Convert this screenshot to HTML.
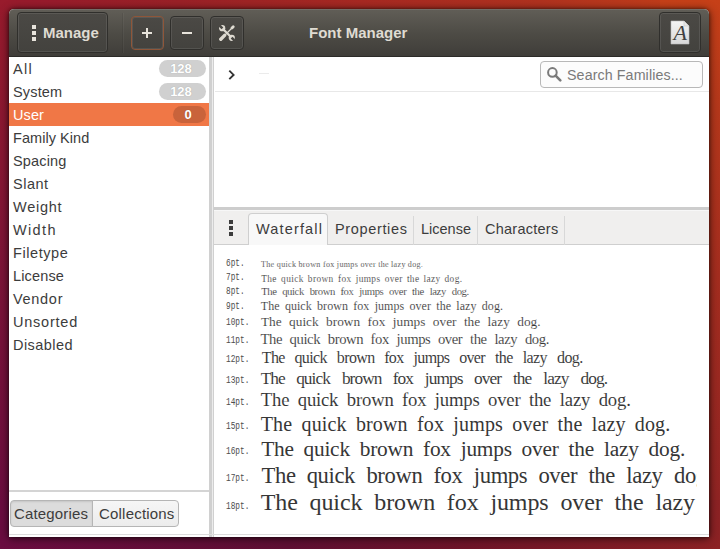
<!DOCTYPE html>
<html><head><meta charset="utf-8">
<style>
*{margin:0;padding:0;box-sizing:border-box}
html,body{width:720px;height:549px;overflow:hidden}
body{position:relative;font-family:"Liberation Sans",sans-serif;background:#7a1438}
.abs{position:absolute}
#bgtop{left:0;top:0;width:720px;height:60px;background:linear-gradient(to right,#981b2c 0%,#9a2127 25%,#a72922 50%,#b0321f 75%,#c64018 100%)}
#bgleft{left:0;top:0;width:60px;height:549px;background:linear-gradient(to bottom,#981b2c 0%,#7c1438 50%,#680c40 100%)}
#bgright{left:660px;top:0;width:60px;height:549px;background:linear-gradient(to bottom,#c64018 0%,#b4371b 20%,#a42d1f 50%,#8c2224 100%)}
#bgbot{left:0;top:500px;width:720px;height:49px;background:linear-gradient(to right,#6a0c40 0%,#5e0f33 40%,#6e1428 65%,#8c2224 100%)}
#win{left:9px;top:9px;width:700px;height:528px;border-radius:5px 5px 0 0;background:#fff;box-shadow:0 1px 9px rgba(0,0,0,.72),0 0 3px rgba(0,0,0,.45)}
#hb{left:9px;top:9px;width:700px;height:48px;border-radius:5px 5px 0 0;background:linear-gradient(to bottom,#615e57 0%,#4e4c46 50%,#3f3d39 100%);border-bottom:1px solid #2c2b28;box-shadow:inset 0 1px 0 rgba(255,255,255,.10)}
.btn{position:absolute;border:1px solid #302f2c;border-radius:4px;background:linear-gradient(to bottom,#4b4945,#43423e);box-shadow:inset 0 0 0 1px rgba(255,255,255,.09)}
.title{position:absolute;color:#dfdbd2;font-weight:bold;font-size:15px;white-space:nowrap}
.side{left:9px;top:57px;width:200px;height:480px;background:#fff}
.row{position:absolute;left:9px;width:200px;height:23px;font-size:14.5px;color:#3c3c3c}
.row span.t{position:absolute;left:4px;top:4px}
.badge{position:absolute;top:3px;height:17px;border-radius:9px;background:#d0d0d0;color:#fff;font-weight:bold;font-size:13px;text-align:center;line-height:18px;padding-right:3px;text-shadow:0 0 1px rgba(0,0,0,.25)}
.sel{background:#f07746;color:#fff}
.sel .badge{background:#c9633b}
.wf{position:absolute;left:226px;white-space:nowrap}
.lab{position:absolute;left:0;font-family:"Liberation Mono",monospace;font-size:9px;color:#555;letter-spacing:-0.8px}
.smp{position:absolute;left:35px;font-family:"Liberation Serif",serif;color:#333}
</style></head><body>
<div id="bgtop" class="abs"></div>
<div id="bgleft" class="abs"></div>
<div id="bgright" class="abs"></div>
<div id="bgbot" class="abs"></div>
<div id="win" class="abs"></div>
<div id="hb" class="abs"></div>

<!-- header buttons -->
<div class="btn" style="left:17px;top:12px;width:91px;height:41px"></div>
<div class="abs" style="left:32px;top:25px;width:4px;height:4px;background:#e8e4dc"></div>
<div class="abs" style="left:32px;top:31px;width:4px;height:4px;background:#e8e4dc"></div>
<div class="abs" style="left:32px;top:37px;width:4px;height:4px;background:#e8e4dc"></div>
<div class="title" style="left:43px;top:24px">Manage</div>

<div class="abs" style="left:122px;top:13px;width:1px;height:40px;background:rgba(0,0,0,.07);box-shadow:1px 0 0 rgba(255,255,255,.04)"></div>
<div class="btn" style="left:131px;top:16px;width:33px;height:34px;border-color:#8f5639"></div>
<div class="abs" style="left:142px;top:32px;width:10px;height:2px;background:#e8e4dc"></div>
<div class="abs" style="left:146px;top:28px;width:2px;height:10px;background:#e8e4dc"></div>

<div class="btn" style="left:170px;top:16px;width:34px;height:34px"></div>
<div class="abs" style="left:182px;top:32px;width:10px;height:2px;background:#e8e4dc"></div>

<div class="btn" style="left:210px;top:16px;width:34px;height:34px"></div>
<svg class="abs" style="left:219px;top:25px" width="16" height="16" viewBox="0 0 16 16">
<defs><mask id="wm"><rect width="16" height="16" fill="#fff"/>
<line x1="-1" y1="-1" x2="3.4" y2="3.4" stroke="#000" stroke-width="2.6"/>
<line x1="17" y1="17" x2="12.6" y2="12.6" stroke="#000" stroke-width="2.6"/></mask></defs>
<g fill="#dfdbd2" stroke="#dfdbd2" mask="url(#wm)">
<line x1="3.5" y1="3.5" x2="12.5" y2="12.5" stroke-width="2.2"/>
<circle cx="3.2" cy="3.2" r="3.1" stroke="none"/>
<circle cx="12.8" cy="12.8" r="3.1" stroke="none"/>
</g>
<g stroke="#dfdbd2" stroke-linecap="round">
<line x1="1.8" y1="14.2" x2="5.6" y2="10.4" stroke-width="3.4"/>
<line x1="5.5" y1="10.5" x2="13" y2="3" stroke-width="1.3"/>
<line x1="13" y1="3" x2="14.2" y2="1.8" stroke-width="2.8"/>
</g></svg>

<div class="title" style="left:309px;top:24px">Font Manager</div>

<div class="btn" style="left:659px;top:12px;width:42px;height:41px"></div>
<svg class="abs" style="left:670px;top:20px" width="20" height="25" viewBox="0 0 20 25">
<defs><linearGradient id="pg" x1="0" y1="0" x2="0" y2="1"><stop offset="0" stop-color="#f4f4f4"/><stop offset="1" stop-color="#d8d8d8"/></linearGradient></defs>
<path d="M1 1 H14 L19 6 V24 H1 Z" fill="url(#pg)" stroke="#bdbdbd" stroke-width="0.6"/>
<path d="M14 1 V6 H19" fill="#e6e6e6" stroke="#c8c8c8" stroke-width="0.6"/>
<text x="3.6" y="19.6" font-family="Liberation Serif" font-style="italic" font-size="22" fill="#404040">A</text>
</svg>

<!-- sidebar -->
<div class="row" style="top:57px"><span class="t" style="letter-spacing:1.3px">All</span><span class="badge" style="left:150px;width:47px">128</span></div>
<div class="row" style="top:80px"><span class="t" style="letter-spacing:0.16px">System</span><span class="badge" style="left:150px;width:47px">128</span></div>
<div class="row sel" style="top:103px"><span class="t" style="letter-spacing:0.1px">User</span><span class="badge" style="left:164px;width:33px">0</span></div>
<div class="row" style="top:126px"><span class="t" style="letter-spacing:0.05px">Family Kind</span></div>
<div class="row" style="top:149px"><span class="t" style="letter-spacing:0.17px">Spacing</span></div>
<div class="row" style="top:172px"><span class="t" style="letter-spacing:0.5px">Slant</span></div>
<div class="row" style="top:195px"><span class="t" style="letter-spacing:0.75px">Weight</span></div>
<div class="row" style="top:218px"><span class="t" style="letter-spacing:1.35px">Width</span></div>
<div class="row" style="top:241px"><span class="t" style="letter-spacing:0.57px">Filetype</span></div>
<div class="row" style="top:264px"><span class="t" style="letter-spacing:0.15px">License</span></div>
<div class="row" style="top:287px"><span class="t" style="letter-spacing:0.7px">Vendor</span></div>
<div class="row" style="top:310px"><span class="t" style="letter-spacing:0.77px">Unsorted</span></div>
<div class="row" style="top:333px"><span class="t" style="letter-spacing:0.46px">Disabled</span></div>

<!-- pane separators -->
<div class="abs" style="left:209px;top:57px;width:5px;height:480px;background:#d0d0d0;border-right:1px solid #d0d0d0"></div>
<div class="abs" style="left:212px;top:57px;width:1px;height:480px;background:#ececec"></div>

<!-- sidebar bottom -->
<div class="abs" style="left:9px;top:490px;width:200px;height:2px;background:#d4d4d4"></div>
<div class="abs" style="left:10px;top:500px;width:83px;height:27px;border:1px solid #b5b5b5;border-radius:4px 0 0 4px;background:#dcdcdc;box-shadow:inset 0 1px 2px rgba(0,0,0,.1);font-size:15px;color:#3c3c3c;padding:4px 0 0 3px;letter-spacing:0.15px">Categories</div>
<div class="abs" style="left:92px;top:500px;width:87px;height:27px;border:1px solid #b5b5b5;border-radius:0 4px 4px 0;background:linear-gradient(#f6f6f6,#ececec);font-size:15px;color:#3c3c3c;padding:4px 0 0 6px;letter-spacing:0.2px">Collections</div>
<div class="abs" style="left:9px;top:534px;width:700px;height:1px;background:#dcdcdc"></div>

<!-- right top -->
<div class="abs" style="left:540px;top:61px;width:163px;height:27px;border:1px solid #b8b8b8;border-radius:4px;background:#fcfcfc"></div>
<div class="abs" style="left:567px;top:67px;font-size:14.25px;color:#7a7a7a;letter-spacing:0.1px">Search Families...</div>
<div class="abs" style="left:215px;top:91px;width:494px;height:1px;background:#e8e8e8"></div>
<svg class="abs" style="left:546px;top:66px" width="16" height="16" viewBox="0 0 16 16">
<circle cx="6.4" cy="6.4" r="4.3" fill="none" stroke="#7a7a7a" stroke-width="2"/>
<line x1="9.6" y1="9.6" x2="14.3" y2="14.3" stroke="#7a7a7a" stroke-width="2.6" stroke-linecap="round"/>
</svg>
<svg class="abs" style="left:225px;top:66px" width="14" height="16" viewBox="0 0 14 16">
<polyline points="4.3,4.6 8.6,8.9 4.3,13.2" fill="none" stroke="#333" stroke-width="1.9"/>
</svg>
<div class="abs" style="left:259px;top:73px;width:10px;height:1px;background:#ebebeb"></div>

<!-- notebook -->
<div class="abs" style="left:214px;top:207px;width:495px;height:3px;background:#cdcdcd"></div>
<div class="abs" style="left:214px;top:210px;width:495px;height:1px;background:#f7f7f7"></div>
<div class="abs" style="left:214px;top:211px;width:495px;height:34px;background:#f0efee;border-bottom:1px solid #cfcfcf"></div>
<div class="abs" style="left:229px;top:220px;width:4px;height:4px;background:#3c3c3c"></div>
<div class="abs" style="left:229px;top:226px;width:4px;height:4px;background:#3c3c3c"></div>
<div class="abs" style="left:229px;top:232px;width:4px;height:4px;background:#3c3c3c"></div>
<div class="abs" style="left:248px;top:213px;width:80px;height:32px;border:1px solid #cfcfcf;border-bottom:none;border-radius:4px 4px 0 0;background:#f8f8f8"></div>
<div class="abs" style="left:256px;top:221px;font-size:14.5px;color:#3c3c3c;letter-spacing:1.15px">Waterfall</div>
<div class="abs" style="left:335px;top:221px;font-size:14.5px;color:#3c3c3c;letter-spacing:0.65px">Properties</div>
<div class="abs" style="left:413px;top:216px;width:1px;height:29px;background:#d8d8d8"></div>
<div class="abs" style="left:421px;top:221px;font-size:14.5px;color:#3c3c3c">License</div>
<div class="abs" style="left:477px;top:216px;width:1px;height:29px;background:#d8d8d8"></div>
<div class="abs" style="left:485px;top:221px;font-size:14.5px;color:#3c3c3c;letter-spacing:0.25px">Characters</div>
<div class="abs" style="left:564px;top:216px;width:1px;height:29px;background:#d8d8d8"></div>

<svg class="abs" style="left:0;top:0" width="720" height="549" viewBox="0 0 720 549">
<defs><clipPath id="wfclip"><rect x="214" y="246" width="482.5" height="288"/></clipPath></defs>
<g clip-path="url(#wfclip)">
<text x="226" y="265.9" font-family="Liberation Mono" font-size="10.6" fill="#4d4d4d" textLength="18.6" lengthAdjust="spacingAndGlyphs">6pt.</text>
<text x="261.01" y="267.40" font-family="Liberation Serif" font-size="8.000" fill="#363636" stroke="#fff" stroke-width="0.12" letter-spacing="0.35">The</text>
<text x="276.81" y="267.40" font-family="Liberation Serif" font-size="8.000" fill="#363636" stroke="#fff" stroke-width="0.12" letter-spacing="0.35">quick</text>
<text x="298.43" y="267.40" font-family="Liberation Serif" font-size="8.000" fill="#363636" stroke="#fff" stroke-width="0.12" letter-spacing="0.35">brown</text>
<text x="322.97" y="267.40" font-family="Liberation Serif" font-size="8.000" fill="#363636" stroke="#fff" stroke-width="0.12" letter-spacing="0.35">fox</text>
<text x="336.83" y="267.40" font-family="Liberation Serif" font-size="8.000" fill="#363636" stroke="#fff" stroke-width="0.12" letter-spacing="0.35">jumps</text>
<text x="360.40" y="267.40" font-family="Liberation Serif" font-size="8.000" fill="#363636" stroke="#fff" stroke-width="0.12" letter-spacing="0.35">over</text>
<text x="378.14" y="267.40" font-family="Liberation Serif" font-size="8.000" fill="#363636" stroke="#fff" stroke-width="0.12" letter-spacing="0.35">the</text>
<text x="391.03" y="267.40" font-family="Liberation Serif" font-size="8.000" fill="#363636" stroke="#fff" stroke-width="0.12" letter-spacing="0.35">lazy</text>
<text x="407.80" y="267.40" font-family="Liberation Serif" font-size="8.000" fill="#363636" stroke="#fff" stroke-width="0.12" letter-spacing="0.35">dog.</text>
<text x="226" y="280.0" font-family="Liberation Mono" font-size="10.6" fill="#4d4d4d" textLength="18.6" lengthAdjust="spacingAndGlyphs">7pt.</text>
<text x="261.15" y="281.50" font-family="Liberation Serif" font-size="9.333" fill="#363636" stroke="#fff" stroke-width="0.12" letter-spacing="0.40">The</text>
<text x="281.09" y="281.50" font-family="Liberation Serif" font-size="9.333" fill="#363636" stroke="#fff" stroke-width="0.12" letter-spacing="0.40">quick</text>
<text x="307.83" y="281.50" font-family="Liberation Serif" font-size="9.333" fill="#363636" stroke="#fff" stroke-width="0.12" letter-spacing="0.40">brown</text>
<text x="337.98" y="281.50" font-family="Liberation Serif" font-size="9.333" fill="#363636" stroke="#fff" stroke-width="0.12" letter-spacing="0.40">fox</text>
<text x="355.66" y="281.50" font-family="Liberation Serif" font-size="9.333" fill="#363636" stroke="#fff" stroke-width="0.12" letter-spacing="0.40">jumps</text>
<text x="384.68" y="281.50" font-family="Liberation Serif" font-size="9.333" fill="#363636" stroke="#fff" stroke-width="0.12" letter-spacing="0.40">over</text>
<text x="406.88" y="281.50" font-family="Liberation Serif" font-size="9.333" fill="#363636" stroke="#fff" stroke-width="0.12" letter-spacing="0.40">the</text>
<text x="423.43" y="281.50" font-family="Liberation Serif" font-size="9.333" fill="#363636" stroke="#fff" stroke-width="0.12" letter-spacing="0.40">lazy</text>
<text x="444.50" y="281.50" font-family="Liberation Serif" font-size="9.333" fill="#363636" stroke="#fff" stroke-width="0.12" letter-spacing="0.40">dog.</text>
<text x="226" y="293.9" font-family="Liberation Mono" font-size="10.6" fill="#4d4d4d" textLength="18.6" lengthAdjust="spacingAndGlyphs">8pt.</text>
<text x="261.20" y="295.40" font-family="Liberation Serif" font-size="10.667" fill="#363636" stroke="#fff" stroke-width="0.12" letter-spacing="-0.38">The</text>
<text x="282.14" y="295.40" font-family="Liberation Serif" font-size="10.667" fill="#363636" stroke="#fff" stroke-width="0.12" letter-spacing="-0.38">quick</text>
<text x="309.65" y="295.40" font-family="Liberation Serif" font-size="10.667" fill="#363636" stroke="#fff" stroke-width="0.12" letter-spacing="-0.38">brown</text>
<text x="340.45" y="295.40" font-family="Liberation Serif" font-size="10.667" fill="#363636" stroke="#fff" stroke-width="0.12" letter-spacing="-0.38">fox</text>
<text x="359.20" y="295.40" font-family="Liberation Serif" font-size="10.667" fill="#363636" stroke="#fff" stroke-width="0.12" letter-spacing="-0.38">jumps</text>
<text x="388.91" y="295.40" font-family="Liberation Serif" font-size="10.667" fill="#363636" stroke="#fff" stroke-width="0.12" letter-spacing="-0.38">over</text>
<text x="412.03" y="295.40" font-family="Liberation Serif" font-size="10.667" fill="#363636" stroke="#fff" stroke-width="0.12" letter-spacing="-0.38">the</text>
<text x="429.69" y="295.40" font-family="Liberation Serif" font-size="10.667" fill="#363636" stroke="#fff" stroke-width="0.12" letter-spacing="-0.38">lazy</text>
<text x="451.72" y="295.40" font-family="Liberation Serif" font-size="10.667" fill="#363636" stroke="#fff" stroke-width="0.12" letter-spacing="-0.38">dog.</text>
<text x="226" y="308.6" font-family="Liberation Mono" font-size="10.6" fill="#4d4d4d" textLength="18.6" lengthAdjust="spacingAndGlyphs">9pt.</text>
<text x="260.81" y="310.10" font-family="Liberation Serif" font-size="12.000" fill="#363636" stroke="#fff" stroke-width="0.12" letter-spacing="0.05">The</text>
<text x="284.90" y="310.10" font-family="Liberation Serif" font-size="12.000" fill="#363636" stroke="#fff" stroke-width="0.12" letter-spacing="0.05">quick</text>
<text x="317.06" y="310.10" font-family="Liberation Serif" font-size="12.000" fill="#363636" stroke="#fff" stroke-width="0.12" letter-spacing="0.05">brown</text>
<text x="353.26" y="310.10" font-family="Liberation Serif" font-size="12.000" fill="#363636" stroke="#fff" stroke-width="0.12" letter-spacing="0.05">fox</text>
<text x="374.66" y="310.10" font-family="Liberation Serif" font-size="12.000" fill="#363636" stroke="#fff" stroke-width="0.12" letter-spacing="0.05">jumps</text>
<text x="409.53" y="310.10" font-family="Liberation Serif" font-size="12.000" fill="#363636" stroke="#fff" stroke-width="0.12" letter-spacing="0.05">over</text>
<text x="436.30" y="310.10" font-family="Liberation Serif" font-size="12.000" fill="#363636" stroke="#fff" stroke-width="0.12" letter-spacing="0.05">the</text>
<text x="456.36" y="310.10" font-family="Liberation Serif" font-size="12.000" fill="#363636" stroke="#fff" stroke-width="0.12" letter-spacing="0.05">lazy</text>
<text x="481.79" y="310.10" font-family="Liberation Serif" font-size="12.000" fill="#363636" stroke="#fff" stroke-width="0.12" letter-spacing="0.05">dog.</text>
<text x="226" y="324.8" font-family="Liberation Mono" font-size="10.6" fill="#4d4d4d" textLength="23.4" lengthAdjust="spacingAndGlyphs">10pt.</text>
<text x="260.89" y="326.30" font-family="Liberation Serif" font-size="13.333" fill="#363636" stroke="#fff" stroke-width="0.12" letter-spacing="0.01">The</text>
<text x="289.04" y="326.30" font-family="Liberation Serif" font-size="13.333" fill="#363636" stroke="#fff" stroke-width="0.12" letter-spacing="0.01">quick</text>
<text x="326.09" y="326.30" font-family="Liberation Serif" font-size="13.333" fill="#363636" stroke="#fff" stroke-width="0.12" letter-spacing="0.01">brown</text>
<text x="367.59" y="326.30" font-family="Liberation Serif" font-size="13.333" fill="#363636" stroke="#fff" stroke-width="0.12" letter-spacing="0.01">fox</text>
<text x="392.78" y="326.30" font-family="Liberation Serif" font-size="13.333" fill="#363636" stroke="#fff" stroke-width="0.12" letter-spacing="0.01">jumps</text>
<text x="432.81" y="326.30" font-family="Liberation Serif" font-size="13.333" fill="#363636" stroke="#fff" stroke-width="0.12" letter-spacing="0.01">over</text>
<text x="463.92" y="326.30" font-family="Liberation Serif" font-size="13.333" fill="#363636" stroke="#fff" stroke-width="0.12" letter-spacing="0.01">the</text>
<text x="487.62" y="326.30" font-family="Liberation Serif" font-size="13.333" fill="#363636" stroke="#fff" stroke-width="0.12" letter-spacing="0.01">lazy</text>
<text x="517.24" y="326.30" font-family="Liberation Serif" font-size="13.333" fill="#363636" stroke="#fff" stroke-width="0.12" letter-spacing="0.01">dog.</text>
<text x="226" y="342.8" font-family="Liberation Mono" font-size="10.6" fill="#4d4d4d" textLength="23.4" lengthAdjust="spacingAndGlyphs">11pt.</text>
<text x="260.54" y="344.30" font-family="Liberation Serif" font-size="14.667" fill="#363636" stroke="#fff" stroke-width="0.12" letter-spacing="-0.40">The</text>
<text x="289.56" y="344.30" font-family="Liberation Serif" font-size="14.667" fill="#363636" stroke="#fff" stroke-width="0.12" letter-spacing="-0.40">quick</text>
<text x="327.79" y="344.30" font-family="Liberation Serif" font-size="14.667" fill="#363636" stroke="#fff" stroke-width="0.12" letter-spacing="-0.40">brown</text>
<text x="370.62" y="344.30" font-family="Liberation Serif" font-size="14.667" fill="#363636" stroke="#fff" stroke-width="0.12" letter-spacing="-0.40">fox</text>
<text x="396.57" y="344.30" font-family="Liberation Serif" font-size="14.667" fill="#363636" stroke="#fff" stroke-width="0.12" letter-spacing="-0.40">jumps</text>
<text x="437.89" y="344.30" font-family="Liberation Serif" font-size="14.667" fill="#363636" stroke="#fff" stroke-width="0.12" letter-spacing="-0.40">over</text>
<text x="469.97" y="344.30" font-family="Liberation Serif" font-size="14.667" fill="#363636" stroke="#fff" stroke-width="0.12" letter-spacing="-0.40">the</text>
<text x="494.38" y="344.30" font-family="Liberation Serif" font-size="14.667" fill="#363636" stroke="#fff" stroke-width="0.12" letter-spacing="-0.40">lazy</text>
<text x="524.93" y="344.30" font-family="Liberation Serif" font-size="14.667" fill="#363636" stroke="#fff" stroke-width="0.12" letter-spacing="-0.40">dog.</text>
<text x="226" y="361.6" font-family="Liberation Mono" font-size="10.6" fill="#4d4d4d" textLength="23.4" lengthAdjust="spacingAndGlyphs">12pt.</text>
<text x="261.85" y="363.10" font-family="Liberation Serif" font-size="16.000" fill="#363636" stroke="#fff" stroke-width="0.06" letter-spacing="-0.65">The</text>
<text x="294.48" y="363.10" font-family="Liberation Serif" font-size="16.000" fill="#363636" stroke="#fff" stroke-width="0.06" letter-spacing="-0.65">quick</text>
<text x="336.87" y="363.10" font-family="Liberation Serif" font-size="16.000" fill="#363636" stroke="#fff" stroke-width="0.06" letter-spacing="-0.65">brown</text>
<text x="384.13" y="363.10" font-family="Liberation Serif" font-size="16.000" fill="#363636" stroke="#fff" stroke-width="0.06" letter-spacing="-0.65">fox</text>
<text x="413.53" y="363.10" font-family="Liberation Serif" font-size="16.000" fill="#363636" stroke="#fff" stroke-width="0.06" letter-spacing="-0.65">jumps</text>
<text x="459.18" y="363.10" font-family="Liberation Serif" font-size="16.000" fill="#363636" stroke="#fff" stroke-width="0.06" letter-spacing="-0.65">over</text>
<text x="495.06" y="363.10" font-family="Liberation Serif" font-size="16.000" fill="#363636" stroke="#fff" stroke-width="0.06" letter-spacing="-0.65">the</text>
<text x="522.84" y="363.10" font-family="Liberation Serif" font-size="16.000" fill="#363636" stroke="#fff" stroke-width="0.06" letter-spacing="-0.65">lazy</text>
<text x="557.09" y="363.10" font-family="Liberation Serif" font-size="16.000" fill="#363636" stroke="#fff" stroke-width="0.06" letter-spacing="-0.65">dog.</text>
<text x="226" y="382.5" font-family="Liberation Mono" font-size="10.6" fill="#4d4d4d" textLength="23.4" lengthAdjust="spacingAndGlyphs">13pt.</text>
<text x="260.65" y="384.00" font-family="Liberation Serif" font-size="17.333" fill="#363636" stroke="#fff" stroke-width="0.06" letter-spacing="-0.93">The</text>
<text x="296.15" y="384.00" font-family="Liberation Serif" font-size="17.333" fill="#363636" stroke="#fff" stroke-width="0.06" letter-spacing="-0.93">quick</text>
<text x="341.88" y="384.00" font-family="Liberation Serif" font-size="17.333" fill="#363636" stroke="#fff" stroke-width="0.06" letter-spacing="-0.93">brown</text>
<text x="392.74" y="384.00" font-family="Liberation Serif" font-size="17.333" fill="#363636" stroke="#fff" stroke-width="0.06" letter-spacing="-0.93">fox</text>
<text x="424.82" y="384.00" font-family="Liberation Serif" font-size="17.333" fill="#363636" stroke="#fff" stroke-width="0.06" letter-spacing="-0.93">jumps</text>
<text x="473.98" y="384.00" font-family="Liberation Serif" font-size="17.333" fill="#363636" stroke="#fff" stroke-width="0.06" letter-spacing="-0.93">over</text>
<text x="512.89" y="384.00" font-family="Liberation Serif" font-size="17.333" fill="#363636" stroke="#fff" stroke-width="0.06" letter-spacing="-0.93">the</text>
<text x="543.26" y="384.00" font-family="Liberation Serif" font-size="17.333" fill="#363636" stroke="#fff" stroke-width="0.06" letter-spacing="-0.93">lazy</text>
<text x="580.46" y="384.00" font-family="Liberation Serif" font-size="17.333" fill="#363636" stroke="#fff" stroke-width="0.06" letter-spacing="-0.93">dog.</text>
<text x="226" y="404.7" font-family="Liberation Mono" font-size="10.6" fill="#4d4d4d" textLength="23.4" lengthAdjust="spacingAndGlyphs">14pt.</text>
<text x="260.84" y="406.20" font-family="Liberation Serif" font-size="18.667" fill="#363636" stroke="#fff" stroke-width="0.06" letter-spacing="-0.19">The</text>
<text x="297.75" y="406.20" font-family="Liberation Serif" font-size="18.667" fill="#363636" stroke="#fff" stroke-width="0.06" letter-spacing="-0.19">quick</text>
<text x="346.83" y="406.20" font-family="Liberation Serif" font-size="18.667" fill="#363636" stroke="#fff" stroke-width="0.06" letter-spacing="-0.19">brown</text>
<text x="402.00" y="406.20" font-family="Liberation Serif" font-size="18.667" fill="#363636" stroke="#fff" stroke-width="0.06" letter-spacing="-0.19">fox</text>
<text x="434.86" y="406.20" font-family="Liberation Serif" font-size="18.667" fill="#363636" stroke="#fff" stroke-width="0.06" letter-spacing="-0.19">jumps</text>
<text x="488.02" y="406.20" font-family="Liberation Serif" font-size="18.667" fill="#363636" stroke="#fff" stroke-width="0.06" letter-spacing="-0.19">over</text>
<text x="528.98" y="406.20" font-family="Liberation Serif" font-size="18.667" fill="#363636" stroke="#fff" stroke-width="0.06" letter-spacing="-0.19">the</text>
<text x="559.80" y="406.20" font-family="Liberation Serif" font-size="18.667" fill="#363636" stroke="#fff" stroke-width="0.06" letter-spacing="-0.19">lazy</text>
<text x="598.73" y="406.20" font-family="Liberation Serif" font-size="18.667" fill="#363636" stroke="#fff" stroke-width="0.06" letter-spacing="-0.19">dog.</text>
<text x="226" y="429.1" font-family="Liberation Mono" font-size="10.6" fill="#4d4d4d" textLength="23.4" lengthAdjust="spacingAndGlyphs">15pt.</text>
<text x="260.70" y="430.60" font-family="Liberation Serif" font-size="20.000" fill="#363636" stroke="#fff" stroke-width="0" letter-spacing="0.14">The</text>
<text x="301.53" y="430.60" font-family="Liberation Serif" font-size="20.000" fill="#363636" stroke="#fff" stroke-width="0" letter-spacing="0.14">quick</text>
<text x="355.90" y="430.60" font-family="Liberation Serif" font-size="20.000" fill="#363636" stroke="#fff" stroke-width="0" letter-spacing="0.14">brown</text>
<text x="417.04" y="430.60" font-family="Liberation Serif" font-size="20.000" fill="#363636" stroke="#fff" stroke-width="0" letter-spacing="0.14">fox</text>
<text x="453.37" y="430.60" font-family="Liberation Serif" font-size="20.000" fill="#363636" stroke="#fff" stroke-width="0" letter-spacing="0.14">jumps</text>
<text x="512.27" y="430.60" font-family="Liberation Serif" font-size="20.000" fill="#363636" stroke="#fff" stroke-width="0" letter-spacing="0.14">over</text>
<text x="557.62" y="430.60" font-family="Liberation Serif" font-size="20.000" fill="#363636" stroke="#fff" stroke-width="0" letter-spacing="0.14">the</text>
<text x="591.69" y="430.60" font-family="Liberation Serif" font-size="20.000" fill="#363636" stroke="#fff" stroke-width="0" letter-spacing="0.14">lazy</text>
<text x="634.77" y="430.60" font-family="Liberation Serif" font-size="20.000" fill="#363636" stroke="#fff" stroke-width="0" letter-spacing="0.14">dog.</text>
<text x="226" y="454.0" font-family="Liberation Mono" font-size="10.6" fill="#4d4d4d" textLength="23.4" lengthAdjust="spacingAndGlyphs">16pt.</text>
<text x="261.13" y="455.50" font-family="Liberation Serif" font-size="21.333" fill="#363636" stroke="#fff" stroke-width="0" letter-spacing="-0.19">The</text>
<text x="303.45" y="455.50" font-family="Liberation Serif" font-size="21.333" fill="#363636" stroke="#fff" stroke-width="0" letter-spacing="-0.19">quick</text>
<text x="359.72" y="455.50" font-family="Liberation Serif" font-size="21.333" fill="#363636" stroke="#fff" stroke-width="0" letter-spacing="-0.19">brown</text>
<text x="422.97" y="455.50" font-family="Liberation Serif" font-size="21.333" fill="#363636" stroke="#fff" stroke-width="0" letter-spacing="-0.19">fox</text>
<text x="460.65" y="455.50" font-family="Liberation Serif" font-size="21.333" fill="#363636" stroke="#fff" stroke-width="0" letter-spacing="-0.19">jumps</text>
<text x="521.59" y="455.50" font-family="Liberation Serif" font-size="21.333" fill="#363636" stroke="#fff" stroke-width="0" letter-spacing="-0.19">over</text>
<text x="568.55" y="455.50" font-family="Liberation Serif" font-size="21.333" fill="#363636" stroke="#fff" stroke-width="0" letter-spacing="-0.19">the</text>
<text x="603.90" y="455.50" font-family="Liberation Serif" font-size="21.333" fill="#363636" stroke="#fff" stroke-width="0" letter-spacing="-0.19">lazy</text>
<text x="648.53" y="455.50" font-family="Liberation Serif" font-size="21.333" fill="#363636" stroke="#fff" stroke-width="0" letter-spacing="-0.19">dog.</text>
<text x="226" y="481.0" font-family="Liberation Mono" font-size="10.6" fill="#4d4d4d" textLength="23.4" lengthAdjust="spacingAndGlyphs">17pt.</text>
<text x="261.50" y="482.50" font-family="Liberation Serif" font-size="22.667" fill="#363636" stroke="#fff" stroke-width="0" letter-spacing="-0.39">The</text>
<text x="306.68" y="482.50" font-family="Liberation Serif" font-size="22.667" fill="#363636" stroke="#fff" stroke-width="0" letter-spacing="-0.39">quick</text>
<text x="366.43" y="482.50" font-family="Liberation Serif" font-size="22.667" fill="#363636" stroke="#fff" stroke-width="0" letter-spacing="-0.39">brown</text>
<text x="433.46" y="482.50" font-family="Liberation Serif" font-size="22.667" fill="#363636" stroke="#fff" stroke-width="0" letter-spacing="-0.39">fox</text>
<text x="473.80" y="482.50" font-family="Liberation Serif" font-size="22.667" fill="#363636" stroke="#fff" stroke-width="0" letter-spacing="-0.39">jumps</text>
<text x="538.43" y="482.50" font-family="Liberation Serif" font-size="22.667" fill="#363636" stroke="#fff" stroke-width="0" letter-spacing="-0.39">over</text>
<text x="588.46" y="482.50" font-family="Liberation Serif" font-size="22.667" fill="#363636" stroke="#fff" stroke-width="0" letter-spacing="-0.39">the</text>
<text x="626.36" y="482.50" font-family="Liberation Serif" font-size="22.667" fill="#363636" stroke="#fff" stroke-width="0" letter-spacing="-0.39">lazy</text>
<text x="673.96" y="482.50" font-family="Liberation Serif" font-size="22.667" fill="#363636" stroke="#fff" stroke-width="0" letter-spacing="-0.39">dog.</text>
<text x="226" y="508.7" font-family="Liberation Mono" font-size="10.6" fill="#4d4d4d" textLength="23.4" lengthAdjust="spacingAndGlyphs">18pt.</text>
<text x="260.74" y="510.20" font-family="Liberation Serif" font-size="24.000" fill="#363636" stroke="#fff" stroke-width="0" letter-spacing="-0.10">The</text>
<text x="309.56" y="510.20" font-family="Liberation Serif" font-size="24.000" fill="#363636" stroke="#fff" stroke-width="0" letter-spacing="-0.10">quick</text>
<text x="374.25" y="510.20" font-family="Liberation Serif" font-size="24.000" fill="#363636" stroke="#fff" stroke-width="0" letter-spacing="-0.10">brown</text>
<text x="446.87" y="510.20" font-family="Liberation Serif" font-size="24.000" fill="#363636" stroke="#fff" stroke-width="0" letter-spacing="-0.10">fox</text>
<text x="490.42" y="510.20" font-family="Liberation Serif" font-size="24.000" fill="#363636" stroke="#fff" stroke-width="0" letter-spacing="-0.10">jumps</text>
<text x="560.42" y="510.20" font-family="Liberation Serif" font-size="24.000" fill="#363636" stroke="#fff" stroke-width="0" letter-spacing="-0.10">over</text>
<text x="614.53" y="510.20" font-family="Liberation Serif" font-size="24.000" fill="#363636" stroke="#fff" stroke-width="0" letter-spacing="-0.10">the</text>
<text x="655.43" y="510.20" font-family="Liberation Serif" font-size="24.000" fill="#363636" stroke="#fff" stroke-width="0" letter-spacing="-0.10">lazy</text>
<text x="706.89" y="510.20" font-family="Liberation Serif" font-size="24.000" fill="#363636" stroke="#fff" stroke-width="0" letter-spacing="-0.10">dog.</text>
</g></svg>
</body></html>
